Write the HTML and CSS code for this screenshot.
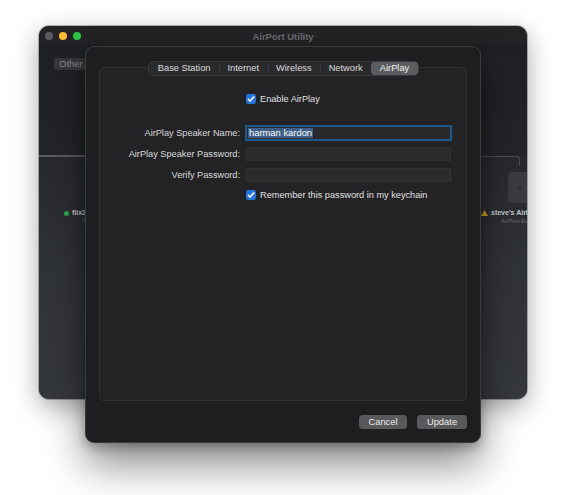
FILE: index.html
```html
<!DOCTYPE html>
<html lang="en">
<head>
<meta charset="utf-8">
<title>AirPort Utility</title>
<link rel="stylesheet" href="styles.css">
</head>
<body>
<div class="desktop">
  <div class="window">
    <div class="titlebar">
      <div class="lights">
        <span class="light light-close"></span>
        <span class="light light-min"></span>
        <span class="light light-zoom"></span>
      </div>
      <div class="title">AirPort Utility</div>
    </div>
    <div class="window-body">
      <div class="toolbar">
        <span class="filter-btn">Other</span>
      </div>
      <!-- network diagram -->
      <div class="trunk"></div>
      <div class="elbow"></div>
      <div class="device"><span class="device-logo"></span></div>
      <div class="node-label node-left"><span class="dot"></span>flix2</div>
      <div class="node-sub node-left-sub">A</div>
      <div class="node-label node-right">
        <svg class="warn" width="7" height="6" viewBox="0 0 7 6"><path d="M3.5 0 L7 6 L0 6 Z" fill="#c9a227"/></svg>steve's AirPort
      </div>
      <div class="node-sub node-right-sub">AirPort Express</div>
    </div>
  </div>

  <div class="sheet">
    <div class="tabs">
      <span class="tab">Base Station</span>
      <span class="tab">Internet</span>
      <span class="tab">Wireless</span>
      <span class="tab">Network</span>
      <span class="tab tab-active">AirPlay</span>
    </div>
    <div class="tabbox">
      <label class="check-row enable-row">
        <span class="check"><svg width="10" height="10" viewBox="0 0 10 10"><path d="M2.4 5.3 L4.2 7.1 L7.7 2.9" fill="none" stroke="#fff" stroke-width="1.5" stroke-linecap="round" stroke-linejoin="round"/></svg></span>
        <span>Enable AirPlay</span>
      </label>
      <div class="form">
        <span class="label">AirPlay Speaker Name:</span>
        <span class="field field-focus"><span class="selection">harman kardon</span></span>
        <span class="label">AirPlay Speaker Password:</span>
        <span class="field"></span>
        <span class="label">Verify Password:</span>
        <span class="field"></span>
        <label class="check-row keychain-row">
          <span class="check"><svg width="10" height="10" viewBox="0 0 10 10"><path d="M2.4 5.3 L4.2 7.1 L7.7 2.9" fill="none" stroke="#fff" stroke-width="1.5" stroke-linecap="round" stroke-linejoin="round"/></svg></span>
          <span>Remember this password in my keychain</span>
        </label>
      </div>
    </div>
    <div class="actions">
      <button class="btn btn-cancel">Cancel</button>
      <button class="btn btn-update">Update</button>
    </div>
  </div>
</div>
</body>
</html>
```

FILE: styles.css
```css
* { box-sizing: border-box; }

body {
  margin: 0;
  background: #ffffff;
}

.desktop {
  position: relative;
  width: 566px;
  height: 495px;
  overflow: hidden;
  font-family: "Liberation Sans", Arial, sans-serif;
  font-size: 9.2px;
  color: #dedede;
}

/* ---------- main window (behind the sheet) ---------- */
.window {
  position: absolute;
  left: 39px;
  top: 26px;
  width: 488px;
  height: 373px;
  border-radius: 10px;
  overflow: hidden;
  background: #222326;
  box-shadow: 0 8px 26px rgba(0, 0, 0, 0.35), 0 0 0 1px rgba(0, 0, 0, 0.25);
}

.titlebar {
  position: relative;
  height: 19px;
  display: flex;
  align-items: center;
  justify-content: center;
  background: #232326;
}

.lights {
  position: absolute;
  left: 6px;
  top: 6px;
  display: flex;
  gap: 6px;
}

.light {
  width: 8px;
  height: 8px;
  border-radius: 50%;
}
.light-close { background: #5b5b5e; }
.light-min { background: #febc2e; }
.light-zoom { background: #28c840; }

.title {
  font-size: 9.5px;
  font-weight: bold;
  color: #6b6b6e;
  margin-top: 1px;
}

.window-body {
  position: relative;
  height: 354px;
  background: linear-gradient(to bottom, #1f2023 0, #232528 110px, #27292d 112px, #2f3236 60%, #35383c 100%);
}

.toolbar {
  padding: 13px 0 0 15px;
}

.filter-btn {
  display: inline-block;
  height: 12px;
  line-height: 12px;
  padding: 0 6px 0 5px;
  border-radius: 3px;
  background: #36373b;
  color: #85868a;
  font-size: 9.5px;
}

.trunk {
  position: absolute;
  left: 0;
  top: 110px;
  width: 60px;
  height: 2px;
  background: #5a5b5e;
}

.elbow {
  position: absolute;
  left: 440px;
  top: 111px;
  width: 41px;
  height: 10px;
  border-top: 1px solid #4c4d50;
  border-right: 1px solid #4c4d50;
  border-top-right-radius: 4px;
}

.device {
  position: absolute;
  left: 469px;
  top: 127px;
  width: 34px;
  height: 31px;
  border-radius: 4px;
  background: #3a3c40;
}

.device-logo {
  position: absolute;
  left: 9px;
  top: 13px;
  width: 5px;
  height: 5px;
  border-radius: 50%;
  background: #323437;
}

.node-label {
  position: absolute;
  display: flex;
  align-items: center;
  gap: 2px;
  font-size: 7px;
  font-weight: bold;
  color: #c9c9cb;
  white-space: nowrap;
  line-height: 8px;
}

.node-sub {
  position: absolute;
  font-size: 6px;
  color: #6c6d70;
  white-space: nowrap;
  line-height: 7px;
}

.node-left { left: 25px; top: 164px; }
.node-left-sub { left: 43px; top: 172px; }
.node-right { left: 442px; top: 164px; }
.node-right-sub { left: 462px; top: 173px; }

.dot {
  width: 5px;
  height: 5px;
  border-radius: 50%;
  background: #2fa84f;
  margin-right: 1px;
}

.warn { margin-right: 1px; }

/* ---------- sheet ---------- */
.sheet {
  position: absolute;
  left: 85px;
  top: 46px;
  width: 396px;
  height: 397px;
  padding: 14px 13px 0;
  border: 1px solid #3b3b3e;
  border-radius: 9px;
  background: #1e1e20;
  box-shadow: 0 22px 42px rgba(0, 0, 0, 0.45), 0 4px 12px rgba(0, 0, 0, 0.3);
  display: flex;
  flex-direction: column;
}

.tabs {
  position: relative;
  z-index: 1;
  align-self: center;
  display: flex;
  height: 15px;
  border: 1px solid #39393c;
  border-radius: 5px;
  background: #2a2a2c;
  margin-left: 1px;
}

.tab {
  position: relative;
  padding: 0 8.5px;
  line-height: 13px;
  font-size: 9.3px;
  color: #dcdcdc;
  border-radius: 4px;
}

.tab + .tab::before {
  content: "";
  position: absolute;
  left: 0;
  top: 3px;
  bottom: 3px;
  width: 1px;
  background: #3c3c3f;
}

.tab-active {
  background: #5d5d61;
  color: #f2f2f2;
}
.tab-active::before { display: none; }

.tabbox {
  margin-top: -9px;
  height: 334px;
  border: 1px solid #313134;
  border-radius: 5px;
  background: #232325;
  padding-top: 26px;
}

.check-row {
  display: flex;
  align-items: center;
  gap: 4px;
  height: 10px;
  color: #e0e0e0;
}

.enable-row {
  margin-left: 146px;
}

.check {
  width: 10px;
  height: 10px;
  border-radius: 2.5px;
  background: #2274e0;
  display: block;
}
.check svg { display: block; }

.form {
  display: grid;
  grid-template-columns: 140px 205px;
  grid-auto-rows: 14px;
  column-gap: 6px;
  row-gap: 7px;
  margin-top: 22px;
}

.label {
  text-align: right;
  line-height: 14px;
  color: #dadada;
  white-space: nowrap;
}

.field {
  display: block;
  height: 14px;
  background: #2b2b2d;
  box-shadow: inset 0 0 0 1px #313133, inset 0 1px 0 #38383a;
}

.field-focus {
  background: #29292b;
  box-shadow: 0 0 0 1px #1c5a8b, inset 0 0 0 1px #1c5a8b;
  padding: 2px 0 0 2px;
}

.selection {
  display: inline-block;
  height: 10px;
  line-height: 10px;
  padding: 0 1px;
  background: #3c5e87;
  color: #ffffff;
  font-size: 9.4px;
}

.keychain-row {
  grid-column: 2;
  align-self: start;
  margin-top: 1px;
}

.actions {
  display: flex;
  justify-content: flex-end;
  gap: 10px;
  margin-top: 14px;
}

.btn {
  height: 14px;
  padding: 0;
  border: none;
  border-radius: 3.5px;
  background: #59595c;
  color: #ececec;
  font-family: inherit;
  font-size: 9.4px;
  line-height: 14px;
}

.btn-cancel { width: 48px; }
.btn-update { width: 50px; }
```
